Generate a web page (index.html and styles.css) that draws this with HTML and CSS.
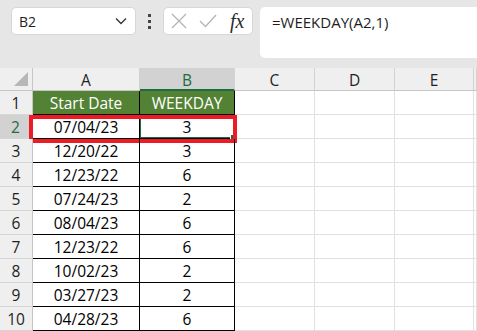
FILE: index.html
```html
<!DOCTYPE html>
<html lang="en">
<head>
    <meta charset="UTF-8">
    <title>WEEKDAY</title>
    <link rel="stylesheet" href="styles.css">
</head>
<body>
    <div class="topbar">
        <div class="namebox">
            <span>B2</span>
            <svg class="chev" width="12" height="8" viewBox="0 0 12 8"><path d="M1 1.5 L6 6.5 L11 1.5" fill="none" stroke="#333" stroke-width="1.3"/></svg>
        </div>
        <div class="dots"><i></i><i></i><i></i></div>
        <div class="fbuttons">
            <svg width="16" height="16" viewBox="0 0 16 16"><path d="M1 1 L15 15 M15 1 L1 15" stroke="#b4b4b4" stroke-width="1.3"/></svg>
            <svg width="18" height="14" viewBox="0 0 18 14"><path d="M1 7 L6.5 12.5 L17 1" fill="none" stroke="#b4b4b4" stroke-width="1.3"/></svg>
            <span class="fx">fx</span>
        </div>
        <div class="formula">=WEEKDAY(A2,1)</div>
    </div>

    <div class="sheet">
        <div class="row hdr">
            <div class="corner"><svg width="14" height="14" viewBox="0 0 14 14"><path d="M14 0 L14 14 L0 14 Z" fill="#b7b7b7"/></svg></div>
            <div class="ch ca">A</div>
            <div class="ch cb sel">B</div>
            <div class="ch cc">C</div>
            <div class="ch cd">D</div>
            <div class="ch ce">E</div>
            <div class="ch cf"></div>
        </div>
        <div class="row">
            <div class="rh">1</div>
            <div class="c ca th">Start Date</div>
            <div class="c cb th">WEEKDAY</div>
            <div class="c cc"></div><div class="c cd"></div><div class="c ce"></div><div class="c cf"></div>
        </div>
        <div class="row">
            <div class="rh sel">2</div>
            <div class="c ca td">07/04/23</div>
            <div class="c cb td active">3<span class="handle"></span></div>
            <div class="c cc"></div><div class="c cd"></div><div class="c ce"></div><div class="c cf"></div>
            <div class="mark"></div>
        </div>
        <div class="row">
            <div class="rh">3</div>
            <div class="c ca td">12/20/22</div>
            <div class="c cb td">3</div>
            <div class="c cc"></div><div class="c cd"></div><div class="c ce"></div><div class="c cf"></div>
        </div>
        <div class="row">
            <div class="rh">4</div>
            <div class="c ca td">12/23/22</div>
            <div class="c cb td">6</div>
            <div class="c cc"></div><div class="c cd"></div><div class="c ce"></div><div class="c cf"></div>
        </div>
        <div class="row">
            <div class="rh">5</div>
            <div class="c ca td">07/24/23</div>
            <div class="c cb td">2</div>
            <div class="c cc"></div><div class="c cd"></div><div class="c ce"></div><div class="c cf"></div>
        </div>
        <div class="row">
            <div class="rh">6</div>
            <div class="c ca td">08/04/23</div>
            <div class="c cb td">6</div>
            <div class="c cc"></div><div class="c cd"></div><div class="c ce"></div><div class="c cf"></div>
        </div>
        <div class="row">
            <div class="rh">7</div>
            <div class="c ca td">12/23/22</div>
            <div class="c cb td">6</div>
            <div class="c cc"></div><div class="c cd"></div><div class="c ce"></div><div class="c cf"></div>
        </div>
        <div class="row">
            <div class="rh">8</div>
            <div class="c ca td">10/02/23</div>
            <div class="c cb td">2</div>
            <div class="c cc"></div><div class="c cd"></div><div class="c ce"></div><div class="c cf"></div>
        </div>
        <div class="row">
            <div class="rh">9</div>
            <div class="c ca td">03/27/23</div>
            <div class="c cb td">2</div>
            <div class="c cc"></div><div class="c cd"></div><div class="c ce"></div><div class="c cf"></div>
        </div>
        <div class="row">
            <div class="rh">10</div>
            <div class="c ca td">04/28/23</div>
            <div class="c cb td">6</div>
            <div class="c cc"></div><div class="c cd"></div><div class="c ce"></div><div class="c cf"></div>
        </div>
    </div>
</body>
</html>
```

FILE: styles.css
```css
body {
    margin: 0;
    width: 477px;
    height: 331px;
    overflow: hidden;
    background-color: #ffffff;
    font-family: "Open Sans", "Noto Sans", sans-serif;
}

.topbar {
    height: 68px;
    background-color: #e6e6e6;
    display: flex;
    align-items: flex-start;
    padding-top: 7px;
    box-sizing: border-box;
}

.namebox {
    margin-left: 11px;
    width: 125px;
    height: 28px;
    background-color: #ffffff;
    border: 1px solid #d6d6d6;
    border-radius: 5px;
    box-sizing: border-box;
    display: flex;
    align-items: center;
    justify-content: space-between;
    padding: 0 8px 0 7px;
    font-size: 14px;
    color: #1e1e1e;
}

.dots {
    width: 27px;
    height: 28px;
    display: flex;
    flex-direction: column;
    align-items: center;
    justify-content: center;
    gap: 3px;
}

.dots i {
    display: block;
    width: 3px;
    height: 3px;
    background-color: #444444;
}

.fbuttons {
    width: 90px;
    height: 28px;
    background-color: #ffffff;
    border: 1px solid #d6d6d6;
    border-radius: 5px;
    box-sizing: border-box;
    display: flex;
    align-items: center;
    gap: 12px;
    padding-left: 7px;
}

.fx {
    font-family: "Liberation Serif", serif;
    font-style: italic;
    font-size: 20px;
    color: #2b2b2b;
    margin-left: 1px;
}

.formula {
    margin-left: 7px;
    flex: 1;
    height: 51px;
    background-color: #ffffff;
    border-radius: 5px 0 0 5px;
    padding: 5px 0 0 12px;
    box-sizing: border-box;
    font-size: 15px;
    color: #1e1e1e;
}

.sheet {
    font-size: 15.5px;
}

.row {
    display: flex;
    height: 24px;
    position: relative;
}

.row.hdr {
    height: 23px;
}

.corner, .rh {
    width: 33px;
    flex: none;
    box-sizing: border-box;
    background-color: #efefef;
    border-right: 1px solid #c6c6c6;
    border-bottom: 1px solid #d6d6d6;
}

.corner {
    display: flex;
    justify-content: flex-end;
    align-items: flex-end;
    padding: 0 4px 4px 0;
    border-bottom-color: #c6c6c6;
}

.rh {
    text-align: center;
    padding-top: 2px;
    line-height: 21px;
    color: #1e1e1e;
}

.rh.sel {
    background-color: #d2d2d2;
    color: #1e6b41;
    border-right: 2px solid #1e6b41;
}

.ch {
    box-sizing: border-box;
    background-color: #efefef;
    border-right: 1px solid #d2d2d2;
    border-bottom: 1px solid #c6c6c6;
    text-align: center;
    padding-top: 1px;
    line-height: 22px;
    color: #1e1e1e;
}

.ch.sel {
    background-color: #d2d2d2;
    color: #1e6b41;
    border-bottom: 2px solid #1e6b41;
}

.ca { width: 107px; flex: none; }
.cb { width: 95px; flex: none; }
.cc { width: 80px; flex: none; }
.cd { width: 80px; flex: none; }
.ce { width: 79px; flex: none; }
.cf { flex: 1; }

.c {
    box-sizing: border-box;
    border-right: 1px solid #e1e1e1;
    border-bottom: 1px solid #e1e1e1;
}

.th, .td {
    text-align: center;
    padding-top: 2px;
    line-height: 21px;
    border-right: 1px solid #000000;
    border-bottom: 1px solid #000000;
}

.th {
    background-color: #548235;
    color: #ffffff;
}

.td {
    color: #000000;
}

.active {
    position: relative;
    box-shadow: inset 0 0 0 1px #1e6b41;
}

.handle {
    position: absolute;
    right: -3px;
    bottom: -3px;
    width: 5px;
    height: 5px;
    background-color: #1e6b41;
    border: 1px solid #ffffff;
}

.mark {
    position: absolute;
    left: 29px;
    top: 0;
    width: 208px;
    height: 28px;
    border: 4px solid #ed1c24;
    box-sizing: border-box;
}
```
